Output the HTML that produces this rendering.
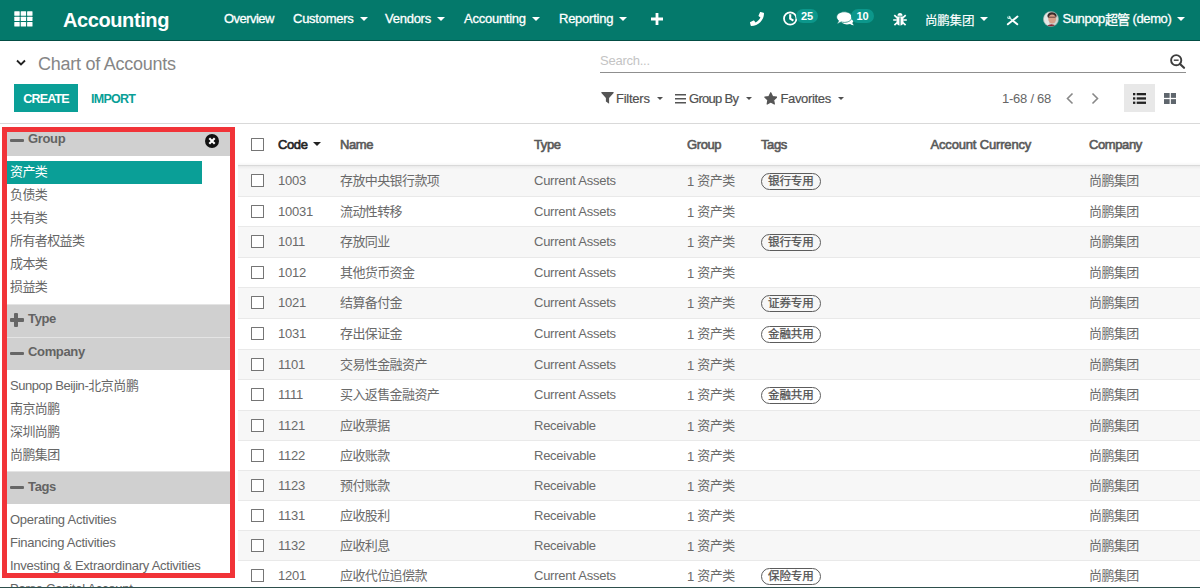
<!DOCTYPE html>
<html lang="en">
<head>
<meta charset="utf-8">
<title>Chart of Accounts - Accounting</title>
<style>
*{box-sizing:border-box;margin:0;padding:0}
html,body{width:1200px;height:588px;overflow:hidden;background:#fff}
body{font-family:"Liberation Sans","Noto Sans CJK SC",sans-serif;font-size:13px;color:#666;position:relative;letter-spacing:-0.25px}
.abs{position:absolute;white-space:nowrap}
/* ---------- navbar ---------- */
#nav{position:absolute;left:0;top:0;width:1200px;height:41px;background:#04796b;border-bottom:1px solid #034d44;color:#fff}
#nav .brand{left:63px;top:7px;font-size:20px;font-weight:bold;line-height:26px;letter-spacing:-0.4px}
#nav .mi{top:11px;font-size:13px;line-height:16px;color:#fff;-webkit-text-stroke:0.3px #fff}
.caret{display:inline-block;width:0;height:0;border-left:4px solid transparent;border-right:4px solid transparent;border-top:4px solid currentColor;vertical-align:middle;margin-left:6px;position:relative;top:-1px}
.badge{position:absolute;height:14px;border-radius:7px;background:#0c978b;color:#fff;font-size:11px;font-weight:bold;line-height:15.5px;text-align:center;letter-spacing:0}
/* ---------- control panel ---------- */
#cp{position:absolute;left:0;top:41px;width:1200px;height:83px;border-bottom:1px solid #d9d9d9;background:#fff}
.bc{left:38px;top:53px;font-size:18px;line-height:22px;color:#868686}
.search{left:600px;top:52px;width:586px;height:21px;border-bottom:1px solid #8f8f8f}
.search span{position:absolute;left:0;top:1px;color:#c4c4c4;font-size:13px;line-height:16px}
.btn-create{left:14px;top:84px;width:64px;height:28px;background:#0a9f97;color:#fff;font-weight:bold;font-size:12.5px;line-height:30px;text-align:center;letter-spacing:-0.85px}
.btn-import{left:91px;top:84px;height:28px;color:#0a9f97;font-size:12.5px;line-height:30px;font-weight:bold;letter-spacing:-0.75px}
.opt{top:91px;font-size:13px;line-height:16px;color:#505050;-webkit-text-stroke:0.2px #505050}
.opt .caret{border-left-width:3.300px;border-right-width:3.300px;border-top-width:3.600px;margin-left:7.500px}
.pager{left:1002px;top:91px;font-size:13px;line-height:16px;color:#666}
.vsw{left:1124px;top:84px;width:31px;height:28px;background:#e8e8e8}
/* ---------- sidebar ---------- */
#side{position:absolute;left:0;top:124px;width:236px;height:464px;overflow:hidden}
.gh{position:absolute;left:7px;width:223px;background:#d0d0d0;color:#636363;font-weight:bold;font-size:13px}
.gh b{position:absolute;left:21px;top:4px;line-height:16px;letter-spacing:-0.35px}
.gh i{position:absolute;left:3px;width:14px;height:3.500px;background:#666;border-radius:1px}
.si{position:absolute;left:10px;font-size:13px;line-height:16px;color:#666;white-space:nowrap}
.sel{position:absolute;left:7px;top:161px;width:195px;height:22.500px;background:#0a9f97}
#redbox{position:absolute;left:2px;top:127px;width:233px;height:451px;border:5.500px solid #f13338;z-index:5}
.cj{letter-spacing:-0.6px}
/* ---------- table ---------- */
#tbl{position:absolute;left:238px;top:124px;width:962px;border-collapse:collapse;table-layout:fixed}
#tbl th{height:41.800px;text-align:left;font-weight:normal;-webkit-text-stroke:0.6px currentColor;letter-spacing:-0.4px;color:#595959;font-size:13px;padding:0 0 1.300px 0;vertical-align:middle;border-bottom:1px solid #e3e3e3}
#tbl td{height:30px;padding:0 0 .8px 0;vertical-align:middle;font-size:13px;color:#6a6a6a;border-bottom:1px solid #e9e9e9;white-space:nowrap;overflow:hidden}
#tbl tbody tr:nth-child(odd) td{background:#f7f7f7}
#tbl tr.tall td{height:31px}
.zh{position:relative;top:-1px;letter-spacing:-0.6px}
#hshadow{position:absolute;left:238px;top:162px;width:962px;height:8px;background:linear-gradient(to bottom,rgba(0,0,0,0) 0,rgba(0,0,0,.035) 40%,rgba(0,0,0,.06) 50%,rgba(0,0,0,.03) 65%,rgba(0,0,0,0) 100%);z-index:2}
.c0{width:40px;padding-left:13px !important}
.c1{width:62px}.c2{width:194px}.c3{width:153px}.c4{width:74px}.c5{width:169px}.c6{width:159px}.c7{width:111px}
.cb{display:block;width:13px;height:13px;border:1px solid #757575;background:#fff;border-radius:.5px}
.tag{display:inline-block;height:16.500px;line-height:14.500px;border:1.500px solid #5c5c5c;border-radius:9px;padding:0 6px;font-size:11.500px;color:#505050;font-weight:normal;-webkit-text-stroke:0.25px currentColor;letter-spacing:-0.1px;vertical-align:middle;position:relative;top:0.500px}
#bottom{position:absolute;left:0;top:586.500px;width:1200px;height:1.500px;background:#2e4f4c;z-index:6}
</style>
</head>
<body>

<!-- ======= top navigation ======= -->
<div id="nav">
  <svg class="abs" style="left:14px;top:11px" width="19" height="16" viewBox="0 0 19 16"><g fill="#fff"><rect x=".3" y=".3" width="5.400" height="4.400" rx=".5"/><rect x="6.700" y=".3" width="5.400" height="4.400" rx=".5"/><rect x="13.100" y=".3" width="5.400" height="4.400" rx=".5"/><rect x=".3" y="5.700" width="5.400" height="4.400" rx=".5"/><rect x="6.700" y="5.700" width="5.400" height="4.400" rx=".5"/><rect x="13.100" y="5.700" width="5.400" height="4.400" rx=".5"/><rect x=".3" y="11.100" width="5.400" height="4.400" rx=".5"/><rect x="6.700" y="11.100" width="5.400" height="4.400" rx=".5"/><rect x="13.100" y="11.100" width="5.400" height="4.400" rx=".5"/></g></svg>
  <div class="abs brand">Accounting</div>
  <div class="abs mi" style="left:224px;letter-spacing:-0.55px">Overview</div>
  <div class="abs mi" style="left:293px">Customers<span class="caret"></span></div>
  <div class="abs mi" style="left:385px">Vendors<span class="caret"></span></div>
  <div class="abs mi" style="left:464px">Accounting<span class="caret"></span></div>
  <div class="abs mi" style="left:559px">Reporting<span class="caret"></span></div>
  <svg class="abs" style="left:651px;top:13px" width="12" height="12" viewBox="0 0 12 12"><path d="M4.6 0h2.8v4.6H12v2.8H7.4V12H4.6V7.4H0V4.6h4.6z" fill="#fff"/></svg>

  <!-- phone -->
  <svg class="abs" style="left:750px;top:12px" width="14" height="14" viewBox="0 0 512 512"><path fill="#fff" d="M493.4 24.600l-104-24c-11.300-2.600-22.900 3.300-27.500 13.900l-48 112c-4.200 9.800-1.400 21.300 6.900 28l60.600 49.600c-36 76.700-98.900 140.500-177.200 177.200l-49.600-60.600c-6.800-8.300-18.200-11.100-28-6.900l-112 48c-10.700 4.700-16.600 16.300-14 27.600l24 104c2.500 10.800 12.100 18.600 23.400 18.600 256.100 0 464-207.500 464-464 0-11.200-7.700-20.900-18.600-23.400z"/></svg>
  <!-- clock -->
  <svg class="abs" style="left:783px;top:11px" width="15" height="15" viewBox="0 0 15 15"><circle cx="7.200" cy="7.500" r="6.200" fill="none" stroke="#fff" stroke-width="1.800"/><path d="M7.200 3.200v4.500l3.200 1.900" fill="none" stroke="#fff" stroke-width="2.100"/></svg>
  <div class="badge" style="left:796px;top:9px;width:22px">25</div>
  <!-- comments -->
  <svg class="abs" style="left:836px;top:11px" width="20" height="16" viewBox="0 0 20 16"><path fill="#fff" d="M11 4.200c3.600 0 6.600 2 6.600 4.800 0 1.100-.5 2.100-1.300 2.900.3.900.9 1.700 1.700 2.400-1.500-.1-2.800-.6-3.900-1.400-.9.300-2 .5-3.100.5-3.600 0-6.600-2-6.600-4.600S7.400 4.200 11 4.200z"/><path fill="#fff" stroke="#04796b" stroke-width=".7" d="M8.300.8c4.300 0 7.700 2.300 7.700 5.300s-3.400 5.300-7.700 5.300c-1.100 0-2.200-.2-3.200-.5-1.200.9-2.700 1.500-4.300 1.500.9-.8 1.500-1.700 1.800-2.700C1.400 8.700.6 7.500.6 6.100.6 3.100 4 .8 8.300.8z"/></svg>
  <div class="badge" style="left:851px;top:9px;width:23px">10</div>
  <!-- bug -->
  <svg class="abs" style="left:893px;top:12px" width="14" height="14" viewBox="0 0 14 14"><g fill="#fff"><path d="M4.500 3.700a2.500 2.600 0 0 1 5 0z"/><path d="M3.500 4.600h7v4.800a3.500 3.900 0 0 1-7 0z"/></g><g stroke="#fff" stroke-width="1.700" fill="none"><path d="M3.600 8H.2M13.800 8h-3.400M3.900 5.700 1.300 3.200M10.100 5.700l2.600-2.500M4.100 10.700l-2.700 2.500M9.900 10.700l2.700 2.500"/></g><path d="M7 5.400v7.600" stroke="#04796b" stroke-width="1"/></svg>
  <div class="abs mi" style="left:925px;letter-spacing:-0.2px;font-size:12.500px;-webkit-text-stroke:0.15px #fff"><span style="position:relative;top:1.500px">尚鹏集团</span><span class="caret"></span></div>
  <!-- tools -->
  <svg class="abs" style="left:1006px;top:15px" width="13" height="11" viewBox="0 0 13 11"><g stroke="#fff" fill="none" stroke-linecap="round"><path d="M11.500 1.600 1.800 9.300" stroke-width="1.900"/><path d="M6.600 5.400l4.700 3.900" stroke-width="1.900"/><path d="M3.600 3l2.600 2" stroke="#d5f3ee" stroke-width="1.300"/></g><circle cx="3" cy="2.400" r="1.700" fill="#c9efe9"/><circle cx="2.500" cy="1.900" r=".7" fill="#04796b"/></svg>
  <!-- avatar -->
  <svg class="abs" style="left:1043px;top:10.500px" width="16" height="16" viewBox="0 0 16 16"><defs><clipPath id="av"><circle cx="8" cy="8" r="7.600"/></clipPath></defs><g clip-path="url(#av)"><rect width="16" height="16" fill="#cdd5d2"/><rect x="0" y="0" width="6" height="16" fill="#e4e8e6"/><ellipse cx="9" cy="4.800" rx="4.600" ry="3.600" fill="#3a2c2c"/><ellipse cx="9.200" cy="8" rx="3.900" ry="4.600" fill="#d7a089"/><path d="M5.800 6.200h6.600" stroke="#5a3a36" stroke-width=".9"/><path d="M1.500 16.500Q8.500 9.800 15.500 16.500z" fill="#8b2232"/></g><circle cx="8" cy="8" r="7.600" fill="none" stroke="#7fa39c" stroke-width=".6"/></svg>
  <div class="abs mi" style="left:1062.500px;letter-spacing:-0.4px">Sunpop<span style="position:relative;top:1px;letter-spacing:-0.8px">超管</span> (demo)<span class="caret"></span></div>
</div>

<!-- ======= control panel ======= -->
<div id="cp"></div>
<svg class="abs" style="left:15.500px;top:59px" width="10" height="8" viewBox="0 0 10 8"><path d="M1 1.500l4 4 4-4" fill="none" stroke="#222" stroke-width="1.800"/></svg>
<div class="abs bc">Chart of Accounts</div>
<div class="abs search"><span>Search...</span></div>
<svg class="abs" style="left:1170px;top:54px" width="16" height="15.500" viewBox="0 0 16 15.500"><circle cx="6.200" cy="6.200" r="5.100" fill="none" stroke="#3d3d3d" stroke-width="1.900"/><path d="M10 10l4 3.800" stroke="#3d3d3d" stroke-width="2.200" stroke-linecap="round"/><path d="M3.800 6.200h4.800" stroke="#3d3d3d" stroke-width="1.400"/></svg>
<div class="abs btn-create">CREATE</div>
<div class="abs btn-import">IMPORT</div>

<svg class="abs" style="left:600.500px;top:92px" width="13" height="12" viewBox="0 0 13 12"><path d="M.8 0h11.400q.8 0 .4.900L8.100 6v5.800L4.900 9.600V6L.4.900Q0 0 .8 0z" fill="#555"/></svg>
<div class="abs opt" style="left:616px">Filters<span class="caret"></span></div>
<svg class="abs" style="left:674.500px;top:93px" width="11.500" height="11" viewBox="0 0 11.500 11"><path d="M0 1.750h11.500M0 5.750h11.500M0 9.750h11.500" stroke="#555" stroke-width="1.600"/></svg>
<div class="abs opt" style="left:689px;letter-spacing:-0.7px">Group By<span class="caret"></span></div>
<svg class="abs" style="left:763.500px;top:92px" width="13.500" height="12.600" viewBox="0 0 15 14"><path d="M7.500 .8l2 4.300 4.600.6-3.400 3.200.8 4.500-4-2.200-4 2.200.8-4.500L.9 5.700l4.600-.6z" fill="#555" stroke="#555" stroke-width="1.300" stroke-linejoin="round"/></svg>
<div class="abs opt" style="left:780.500px;letter-spacing:-0.35px">Favorites<span class="caret"></span></div>

<div class="abs pager">1-68 / 68</div>
<svg class="abs" style="left:1066px;top:92px" width="8" height="13" viewBox="0 0 8 13"><path d="M6.500 1.500l-5 5 5 5" fill="none" stroke="#888" stroke-width="1.600"/></svg>
<svg class="abs" style="left:1091px;top:92px" width="8" height="13" viewBox="0 0 8 13"><path d="M1.500 1.500l5 5-5 5" fill="none" stroke="#888" stroke-width="1.600"/></svg>
<div class="abs vsw"></div>
<svg class="abs" style="left:1133px;top:93px" width="13" height="11" viewBox="0 0 14 12" preserveAspectRatio="none"><g fill="#222"><rect x="0" y="0" width="2.500" height="2.500"/><rect x="4" y="0" width="10" height="2.500"/><rect x="0" y="4.700" width="2.500" height="2.500"/><rect x="4" y="4.700" width="10" height="2.500"/><rect x="0" y="9.400" width="2.500" height="2.500"/><rect x="4" y="9.400" width="10" height="2.500"/></g></svg>
<svg class="abs" style="left:1163.500px;top:93px" width="12.500" height="11" viewBox="0 0 14 12" preserveAspectRatio="none"><g fill="#5f666d"><rect x="0" y="0" width="6.300" height="5.300"/><rect x="7.700" y="0" width="6.300" height="5.300"/><rect x="0" y="6.700" width="6.300" height="5.300"/><rect x="7.700" y="6.700" width="6.300" height="5.300"/></g></svg>

<!-- ======= sidebar ======= -->
<div class="gh" style="top:128px;height:28px"><i style="top:10.500px"></i><b style="top:3px">Group</b></div>
<svg class="abs" style="left:205px;top:134px" width="14" height="14" viewBox="0 0 14 14"><circle cx="7" cy="7" r="7" fill="#111"/><path d="M4.300 4.300l5.400 5.400M9.700 4.300l-5.400 5.400" stroke="#fff" stroke-width="2.100"/></svg>
<div class="sel"></div>
<div class="si cj" style="top:164px;color:#fff">资产类</div>
<div class="si cj" style="top:187px">负债类</div>
<div class="si cj" style="top:210px">共有类</div>
<div class="si cj" style="top:233px">所有者权益类</div>
<div class="si cj" style="top:256px">成本类</div>
<div class="si cj" style="top:279px">损益类</div>

<div class="gh" style="top:303.800px;height:33.200px;border-top:1.200px solid #e4e4e4"><i style="top:13.500px"></i><i style="top:8px;left:7.200px;width:3.500px;height:14.500px"></i><b style="top:6px">Type</b></div>
<div class="gh" style="top:337px;height:32.500px;border-top:1.500px solid #e4e4e4"><i style="top:13.500px"></i><b style="top:6px">Company</b></div>
<div class="si" style="top:378px;letter-spacing:-0.45px">Sunpop Beijin-北京尚鹏</div>
<div class="si cj" style="top:401px">南京尚鹏</div>
<div class="si cj" style="top:424px">深圳尚鹏</div>
<div class="si cj" style="top:447px">尚鹏集团</div>

<div class="gh" style="top:470.800px;height:33.200px;border-top:1.200px solid #e4e4e4"><i style="top:14px"></i><b style="top:7px">Tags</b></div>
<div class="si" style="top:512px">Operating Activities</div>
<div class="si" style="top:535px">Financing Activities</div>
<div class="si" style="top:558px">Investing &amp; Extraordinary Activities</div>
<div class="si" style="top:581px">Parse Capital Account</div>
<div id="redbox"></div>

<!-- ======= list view ======= -->
<table id="tbl">
<thead><tr>
<th class="c0"><span class="cb"></span></th>
<th class="c1" style="color:#222">Code<span class="caret" style="margin-left:6px"></span></th>
<th class="c2">Name</th><th class="c3">Type</th><th class="c4">Group</th><th class="c5">Tags</th><th class="c6" style="letter-spacing:-0.17px;padding-left:.5px">Account Currency</th><th class="c7">Company</th>
</tr></thead>
<tbody>
<tr class="tall"><td class="c0"><span class="cb"></span></td><td class="c1">1003</td><td class="c2"><span class="zh">存放中央银行款项</span></td><td class="c3">Current Assets</td><td class="c4">1 <span class="zh">资产类</span></td><td class="c5"><span class="tag">银行专用</span></td><td class="c6"></td><td class="c7"><span class="zh">尚鹏集团</span></td></tr>
<tr><td class="c0"><span class="cb"></span></td><td class="c1">10031</td><td class="c2"><span class="zh">流动性转移</span></td><td class="c3">Current Assets</td><td class="c4">1 <span class="zh">资产类</span></td><td class="c5"></td><td class="c6"></td><td class="c7"><span class="zh">尚鹏集团</span></td></tr>
<tr class="tall"><td class="c0"><span class="cb"></span></td><td class="c1">1011</td><td class="c2"><span class="zh">存放同业</span></td><td class="c3">Current Assets</td><td class="c4">1 <span class="zh">资产类</span></td><td class="c5"><span class="tag">银行专用</span></td><td class="c6"></td><td class="c7"><span class="zh">尚鹏集团</span></td></tr>
<tr><td class="c0"><span class="cb"></span></td><td class="c1">1012</td><td class="c2"><span class="zh">其他货币资金</span></td><td class="c3">Current Assets</td><td class="c4">1 <span class="zh">资产类</span></td><td class="c5"></td><td class="c6"></td><td class="c7"><span class="zh">尚鹏集团</span></td></tr>
<tr class="tall"><td class="c0"><span class="cb"></span></td><td class="c1">1021</td><td class="c2"><span class="zh">结算备付金</span></td><td class="c3">Current Assets</td><td class="c4">1 <span class="zh">资产类</span></td><td class="c5"><span class="tag">证券专用</span></td><td class="c6"></td><td class="c7"><span class="zh">尚鹏集团</span></td></tr>
<tr class="tall"><td class="c0"><span class="cb"></span></td><td class="c1">1031</td><td class="c2"><span class="zh">存出保证金</span></td><td class="c3">Current Assets</td><td class="c4">1 <span class="zh">资产类</span></td><td class="c5"><span class="tag">金融共用</span></td><td class="c6"></td><td class="c7"><span class="zh">尚鹏集团</span></td></tr>
<tr><td class="c0"><span class="cb"></span></td><td class="c1">1101</td><td class="c2"><span class="zh">交易性金融资产</span></td><td class="c3">Current Assets</td><td class="c4">1 <span class="zh">资产类</span></td><td class="c5"></td><td class="c6"></td><td class="c7"><span class="zh">尚鹏集团</span></td></tr>
<tr class="tall"><td class="c0"><span class="cb"></span></td><td class="c1">1111</td><td class="c2"><span class="zh">买入返售金融资产</span></td><td class="c3">Current Assets</td><td class="c4">1 <span class="zh">资产类</span></td><td class="c5"><span class="tag">金融共用</span></td><td class="c6"></td><td class="c7"><span class="zh">尚鹏集团</span></td></tr>
<tr><td class="c0"><span class="cb"></span></td><td class="c1">1121</td><td class="c2"><span class="zh">应收票据</span></td><td class="c3">Receivable</td><td class="c4">1 <span class="zh">资产类</span></td><td class="c5"></td><td class="c6"></td><td class="c7"><span class="zh">尚鹏集团</span></td></tr>
<tr><td class="c0"><span class="cb"></span></td><td class="c1">1122</td><td class="c2"><span class="zh">应收账款</span></td><td class="c3">Receivable</td><td class="c4">1 <span class="zh">资产类</span></td><td class="c5"></td><td class="c6"></td><td class="c7"><span class="zh">尚鹏集团</span></td></tr>
<tr><td class="c0"><span class="cb"></span></td><td class="c1">1123</td><td class="c2"><span class="zh">预付账款</span></td><td class="c3">Receivable</td><td class="c4">1 <span class="zh">资产类</span></td><td class="c5"></td><td class="c6"></td><td class="c7"><span class="zh">尚鹏集团</span></td></tr>
<tr><td class="c0"><span class="cb"></span></td><td class="c1">1131</td><td class="c2"><span class="zh">应收股利</span></td><td class="c3">Receivable</td><td class="c4">1 <span class="zh">资产类</span></td><td class="c5"></td><td class="c6"></td><td class="c7"><span class="zh">尚鹏集团</span></td></tr>
<tr><td class="c0"><span class="cb"></span></td><td class="c1">1132</td><td class="c2"><span class="zh">应收利息</span></td><td class="c3">Receivable</td><td class="c4">1 <span class="zh">资产类</span></td><td class="c5"></td><td class="c6"></td><td class="c7"><span class="zh">尚鹏集团</span></td></tr>
<tr class="tall"><td class="c0"><span class="cb"></span></td><td class="c1">1201</td><td class="c2"><span class="zh">应收代位追偿款</span></td><td class="c3">Current Assets</td><td class="c4">1 <span class="zh">资产类</span></td><td class="c5"><span class="tag">保险专用</span></td><td class="c6"></td><td class="c7"><span class="zh">尚鹏集团</span></td></tr>
</tbody>
</table>
<div id="hshadow"></div>
<div id="bottom"></div>
</body>
</html>
